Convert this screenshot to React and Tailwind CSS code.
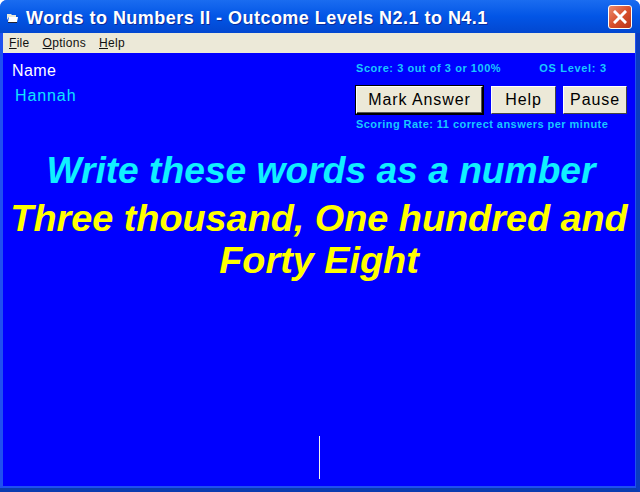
export default function App() {
  const arial = { fontFamily: '"Liberation Sans", Arial, sans-serif' };
  return (
    <div className="w-[640px] h-[492px] overflow-hidden flex flex-col bg-[#1f50f0] rounded-t-[7px]" style={arial}>
      {/* Title bar */}
      <div className="h-[33px] shrink-0 flex items-center pl-[7px] pr-[8px] bg-gradient-to-b from-[#1a6cf0] via-[#0255e6] to-[#0247d0]">
        <svg width="11" height="10" viewBox="0 0 11 10" className="shrink-0 mt-[2px]">
          <path d="M0 1h4l1 1h4v2H2L0 7z" fill="#e8e8d8" />
          <path d="M2 4h9l-1 5H1z" fill="#fff" />
          <path d="M1 9.5h9" stroke="#223" strokeWidth="1" />
        </svg>
        <span className="ml-[8px] mt-[3px] text-white font-bold text-[18px] leading-none tracking-[0.47px] whitespace-nowrap [text-shadow:1px_1px_0_#0a2a9a]">
          Words to Numbers II - Outcome Levels N2.1 to N4.1
        </span>
        <div className="ml-auto mt-[1px] w-[24px] h-[24px] rounded-[3px] border border-white bg-gradient-to-br from-[#ea8a6c] via-[#d9502c] to-[#b8341a] flex items-center justify-center shrink-0">
          <svg width="14" height="14" viewBox="0 0 14 14">
            <path d="M2 2l10 10M12 2L2 12" stroke="#fff" strokeWidth="3" strokeLinecap="square" />
          </svg>
        </div>
      </div>
      {/* Body within frame */}
      <div className="flex-1 flex flex-col pl-[3px] pr-[1px] border-r-4 border-b-4 border-r-[#0a3cc0] border-b-[#0a3cb0] min-h-0">
        <div className="h-[20px] shrink-0 bg-[#ece9d8] flex items-center gap-[13px] pl-[6px] text-[12px] tracking-[0.3px] text-[#111]">
          <span><u>F</u>ile</span>
          <span><u>O</u>ptions</span>
          <span><u>H</u>elp</span>
        </div>
        <div className="flex-1 mb-[2px] bg-[#0000ff] flex flex-col min-h-0">
          <div className="flex justify-between h-[83px] shrink-0">
            <div className="pl-[9px] pt-[9px]">
              <div className="text-white text-[16px] leading-[18px] tracking-[0.4px]">Name</div>
              <div className="text-[#10e4ff] text-[16px] leading-[18px] tracking-[0.9px] mt-[7px] ml-[3px]">Hannah</div>
            </div>
            <div className="w-[279px] shrink-0 pt-[8px] text-[#19c8ff] font-bold text-[11px] leading-[14px] tracking-[0.45px]">
              <div className="flex whitespace-nowrap">
                <span className="tracking-[0.55px]">Score: 3 out of 3 or 100%</span>
                <span className="ml-[38px] tracking-[0.7px]">OS Level: 3</span>
              </div>
              <div className="flex gap-[8px] mt-[11px] text-black font-normal text-[16px] tracking-[0.9px]">
                <button className="w-[127px] h-[28px] bg-[#ece9d8] border border-t-white border-l-white border-r-black border-b-black shadow-[inset_-1px_-1px_0_#555,0_0_0_1px_#000]">Mark Answer</button>
                <button className="w-[65px] h-[28px] bg-[#ece9d8] border border-t-white border-l-white border-r-[#444] border-b-[#444]">Help</button>
                <button className="w-[64px] h-[28px] bg-[#ece9d8] border border-t-white border-l-white border-r-[#444] border-b-[#444] -ml-px">Pause</button>
              </div>
              <div className="mt-[3px] whitespace-nowrap">Scoring Rate: 11 correct answers per minute</div>
            </div>
          </div>
          <div className="text-center italic font-bold whitespace-nowrap">
            <div className="text-[#10f0ff] text-[37.2px] leading-[40px] mt-[14px] pl-[4px]">Write these words as a number</div>
            <div className="text-[#ffff00] text-[37.8px] leading-[42px] mt-[7px]">
              Three thousand, One hundred and<br />Forty Eight
            </div>
          </div>
          <div className="mt-auto mb-[7px] flex justify-center">
            <div className="w-px h-[43px] bg-[#f0f0f0]" />
          </div>
        </div>
      </div>
    </div>
  );
}
